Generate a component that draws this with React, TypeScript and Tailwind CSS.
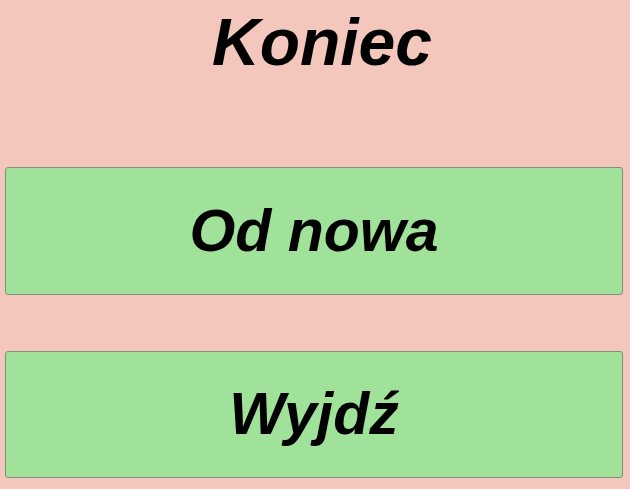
export default function App() {
  return (
    <div
      className="w-[630px] h-[489px] bg-[#f4c7bc] px-[5px] flex flex-col overflow-hidden"
      style={{ fontFamily: '"Liberation Sans", Arial, sans-serif' }}
    >
      <h1 className="pt-[4px] pl-[14px] text-[66px] leading-[76px] font-bold italic text-black text-center">
        Koniec
      </h1>
      <button className="mt-[87px] h-[128px] w-[618px] bg-[#a1e29a] border border-[#858f80] rounded-[3px] text-[59px] font-bold italic text-black text-center">
        Od nowa
      </button>
      <button className="mt-[56px] h-[127px] w-[618px] bg-[#a1e29a] border border-[#858f80] rounded-[3px] text-[59px] font-bold italic text-black text-center">
        Wyjdź
      </button>
    </div>
  );
}
